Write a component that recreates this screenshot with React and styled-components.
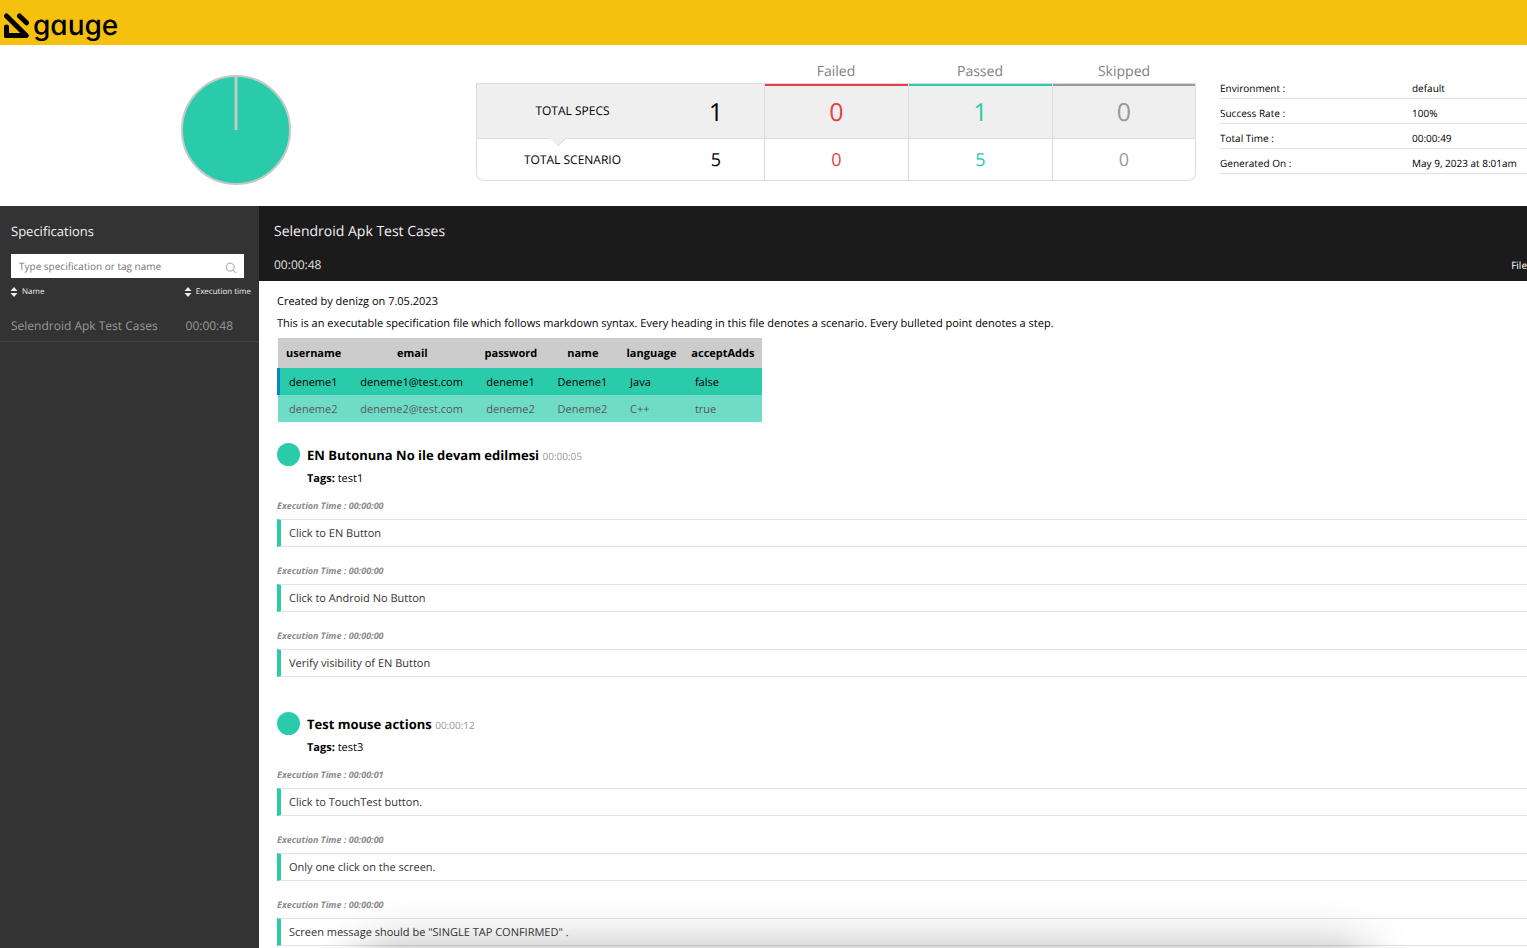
import React from "react";
import styled, { createGlobalStyle } from "styled-components";

const green = "#29cbab";
const red = "#e73e48";
const grey = "#999999";

const GlobalStyle = createGlobalStyle`
  *, *::before, *::after { box-sizing: border-box; }
  html, body { margin: 0; }
  body {
    background: #fff;
    color: #000;
    font: 400 11px/22px "Open Sans", "Noto Sans", sans-serif;
    text-rendering: geometricPrecision;
  }
  input, button { text-rendering: inherit; }
  h1, h2, h3, p, ul, dl, dd { margin: 0; padding: 0; }
  ul { list-style: none; }
`;

const Page = styled.div`
  min-height: 100vh;
  display: flex;
  flex-direction: column;
  overflow-x: hidden;
`;

const TopBar = styled.header`
  height: 45px;
  padding: 6px 3px 0;
  background: #f5c10e;
`;

const Brand = styled.a`
  display: inline-flex;
  gap: 3px;
  color: #000;
  text-decoration: none;
  font: 500 28px/38px Inter, sans-serif;
  font-feature-settings: "cv11";
  svg { margin-top: 7px; }
`;

const Summary = styled.section`
  display: flex;
  height: 161px;
  padding-top: 16px;
`;

const ChartArea = styled.div`
  flex: 1;
  padding: 13px 4px 0 0;
  text-align: center;
`;

const Totals = styled.table`
  width: 720px;
  height: 120px;
  table-layout: fixed;
  border-collapse: separate;
  border-spacing: 0;
  text-align: center;
  thead th {
    height: 22px;
    padding: 0;
    color: #808080;
    font: 400 14px/20px "Open Sans", sans-serif;
  }
`;

const Cell = styled.td`
  padding: ${(p) => (p.$big ? 2 : 0)}px 0 0;
  border: 0 solid #dcdcdc;
  border-left-width: 1px;
  border-bottom-width: 1px;
  background: ${(p) => (p.$big ? "#efefef" : "#fff")};
  height: ${(p) => (p.$big ? 56 : 42)}px;
  color: ${(p) => p.$color || "#000"};
  font-size: ${(p) => (p.$big ? 25 : 18)}px;
  border-top-width: ${(p) => (p.$big ? 1 : 0)}px;
  box-shadow: ${(p) => (p.$big && p.$color ? `inset 0 2px ${p.$color}` : "none")};
  &:last-child { border-right-width: 1px; }
  tr:last-child > &:last-child { border-bottom-right-radius: 8px; }
`;

const LabelCell = styled.th`
  position: relative;
  padding: 0;
  border: solid #dcdcdc;
  border-width: ${(p) => (p.$big ? "1px 0 1px 1px" : "0 0 1px 1px")};
  border-bottom-left-radius: ${(p) => (p.$big ? 0 : 8)}px;
  background: ${(p) => (p.$big ? "#efefef" : "#fff")};
  font-weight: 400;
  font-size: 12px;
`;

const PlainCell = styled(Cell)`
  border-left-width: 0;
`;

const Notch = styled.span`
  position: absolute;
  left: 75px;
  bottom: -6px;
  width: 12px;
  height: 12px;
  background: #efefef;
  border: solid #dcdcdc;
  border-width: 0 1px 0 0;
  transform: rotate(45deg);
  z-index: 1;
`;

const RunInfo = styled.dl`
  width: 307px;
  margin-left: 24px;
  padding-top: 13px;
  font-size: 10px;
  line-height: 14px;
`;

const InfoRow = styled.div`
  display: grid;
  grid-template-columns: 192px 1fr;
  height: 25px;
  padding-top: 7px;
  border-bottom: 1px solid #e2e2e2;
`;

const Body = styled.div`
  flex: 1;
  display: flex;
`;

const Sidebar = styled.aside`
  width: 259px;
  flex: none;
  background: #333;
  color: #eee;
`;

const SidebarTitle = styled.h2`
  padding: 14px 11px 0;
  font-weight: 400;
  font-size: 13px;
  color: #f0f0f0;
`;

const SearchBox = styled.label`
  display: flex;
  align-items: center;
  height: 24px;
  margin: 12px 15px 0 11px;
  padding: 0 7px 0 8px;
  background: #fff;
  input {
    flex: 1;
    min-width: 0;
    padding: 0;
    border: 0;
    outline: 0;
    background: transparent;
    font: 400 10px/16px "Open Sans", sans-serif;
    color: #333;
  }
  input::placeholder { color: #757575; opacity: 1; }
  svg { margin-top: 3px; }
`;

const SortBar = styled.div`
  display: flex;
  justify-content: space-between;
  padding: 6px 8px 0 10px;
`;

const SortButton = styled.button`
  display: inline-flex;
  align-items: center;
  gap: 4px;
  padding: 0;
  border: 0;
  background: none;
  color: #eee;
  font: 400 8px/16px "Open Sans", sans-serif;
`;

const SpecLink = styled.a`
  display: flex;
  justify-content: space-between;
  height: 31px;
  margin-top: 11px;
  padding: 5px 26px 0 11px;
  border-bottom: 1px solid #404040;
  color: #999;
  font-size: 12px;
  line-height: 20px;
  text-decoration: none;
`;

const Content = styled.main`
  flex: 1;
  min-width: 0;
`;

const SpecHeader = styled.header`
  height: 75px;
  padding: 15px 0 0 15px;
  background: #1b1b1b;
  color: #e0e0e0;
  h1 { font-weight: 400; font-size: 14px; line-height: 22px; color: #f0f0f0; }
`;

const SpecMeta = styled.div`
  display: flex;
  justify-content: space-between;
  margin-top: 12px;
  line-height: 20px;
  time { font-size: 12px; }
  span { font-size: 10px; color: #fff; }
`;

const Spec = styled.div`
  padding: 10px 0 3px 18px;
`;

const DataTable = styled.table`
  width: 484px;
  margin: 3px 0 0 1px;
  border-collapse: collapse;
  th { height: 30px; padding: 2px 7px 0; background: #ccc; font-weight: 700; }
`;

const DataRow = styled.tr`
  background: ${green};
  opacity: ${(p) => (p.$active ? 1 : 0.67)};
  td { height: 27px; padding: 2px 11px 0; line-height: 16px; }
  td:first-child {
    box-shadow: ${(p) => (p.$active ? "-1px 0 #0b84c6, inset 2px 0 #0b84c6" : "none")};
  }
`;

const Scenario = styled.section`
  margin-top: ${(p) => (p.$first ? 21 : 35)}px;
`;

const ScenarioHead = styled.div`
  display: grid;
  grid-template-columns: 22px 1fr;
  column-gap: 8px;
  height: 55px;
`;

const StatusDot = styled.span`
  width: 23px;
  height: 23px;
  border-radius: 50%;
  background: ${green};
`;

const ScenarioTitle = styled.h3`
  font-size: 13px;
  line-height: 24px;
  time { font-size: 10px; font-weight: 400; color: ${grey}; }
`;

const ExecTime = styled.p`
  color: #8c8c8c;
  font: italic 700 9px/16px "Open Sans", sans-serif;
`;

const Step = styled.div`
  height: 28px;
  margin: 5px 0 16px;
  padding-left: 8px;
  border: solid #e2e2e2;
  border-width: 1px 0;
  border-left: 4px solid ${green};
  color: #333;
  line-height: 27px;
`;

const DockShadow = styled.div`
  position: fixed;
  top: 100%;
  left: 360px;
  right: 160px;
  height: 80px;
  border-radius: 16px;
  box-shadow: 0 0 48px rgba(0, 0, 0, 0.3);
  pointer-events: none;
`;

const GaugeMark = () => (
  <svg width="27" height="26" viewBox="0 0 27 26" fill="none" stroke="#000" strokeWidth="5" strokeLinecap="round" strokeLinejoin="round" aria-hidden="true">
    <path d="M3.500 3 23.200 22.500H3.500V14.500" />
    <path d="M3.500 14V22.500H20" />
    <path d="M16.500 3 23.500 9.800" />
  </svg>
);

const SortIcon = () => (
  <svg width="8" height="12" viewBox="0 0 8 12" fill="currentColor" aria-hidden="true">
    <path d="M4 1 7.500 5H.5zM4 11 .5 7h7z" />
  </svg>
);

const SearchIcon = () => (
  <svg width="12" height="12" viewBox="0 0 12 12" fill="none" stroke="#bbb" strokeWidth="1.200" aria-hidden="true">
    <circle cx="5.200" cy="5.200" r="4" />
    <path d="m8.200 8.200 3 3" />
  </svg>
);

const info = [
  ["Environment :", "default"],
  ["Success Rate :", "100%"],
  ["Total Time :", "00:00:49"],
  ["Generated On :", "May 9, 2023 at 8:01am"],
];

const columns = ["username", "email", "password", "name", "language", "acceptAdds"];
const rows = [
  ["deneme1", "deneme1@test.com", "deneme1", "Deneme1", "Java", "false"],
  ["deneme2", "deneme2@test.com", "deneme2", "Deneme2", "C++", "true"],
];

const scenarios = [
  {
    title: "EN Butonuna No ile devam edilmesi",
    time: "00:00:05",
    tag: "test1",
    steps: [
      ["00:00:00", "Click to EN Button"],
      ["00:00:00", "Click to Android No Button"],
      ["00:00:00", "Verify visibility of EN Button"],
    ],
  },
  {
    title: "Test mouse actions",
    time: "00:00:12",
    tag: "test3",
    steps: [
      ["00:00:01", "Click to TouchTest button."],
      ["00:00:00", "Only one click on the screen."],
      ["00:00:00", 'Screen message should be "SINGLE TAP CONFIRMED" .'],
    ],
  },
];

const TotalsRow = ({ label, total, counts, big }) => (
  <tr>
    <LabelCell scope="row" $big={big}>
      {label}
      {big && <Notch />}
    </LabelCell>
    <PlainCell $big={big}>{total}</PlainCell>
    <Cell $big={big} $color={red}>{counts[0]}</Cell>
    <Cell $big={big} $color={green}>{counts[1]}</Cell>
    <Cell $big={big} $color={grey}>{counts[2]}</Cell>
  </tr>
);

export default function App() {
  return (
    <Page>
      <GlobalStyle />
      <TopBar>
        <Brand href="#">
          <GaugeMark />
          gauge
        </Brand>
      </TopBar>
      <Summary>
        <ChartArea>
          <svg width="112" height="112" viewBox="0 0 112 112" role="img" aria-label="All passed">
            <circle cx="56" cy="56" r="54" fill={green} stroke="#c4c9c8" strokeWidth="2" />
            <path d="M56 56V2" stroke="#c4c9c8" strokeWidth="3" />
          </svg>
        </ChartArea>
        <Totals>
          <colgroup>
            <col width="192" />
            <col width="96" />
            <col />
            <col />
            <col />
          </colgroup>
          <thead>
            <tr>
              <th colSpan={2} />
              <th scope="col">Failed</th>
              <th scope="col">Passed</th>
              <th scope="col">Skipped</th>
            </tr>
          </thead>
          <tbody>
            <TotalsRow big label="TOTAL SPECS" total={1} counts={[0, 1, 0]} />
            <TotalsRow label="TOTAL SCENARIO" total={5} counts={[0, 5, 0]} />
          </tbody>
        </Totals>
        <RunInfo>
          {info.map(([k, v]) => (
            <InfoRow key={k}>
              <dt>{k}</dt>
              <dd>{v}</dd>
            </InfoRow>
          ))}
        </RunInfo>
      </Summary>
      <Body>
        <Sidebar>
          <SidebarTitle>Specifications</SidebarTitle>
          <SearchBox>
            <input type="text" placeholder="Type specification or tag name" aria-label="Search specifications" />
            <SearchIcon />
          </SearchBox>
          <SortBar>
            <SortButton><SortIcon />Name</SortButton>
            <SortButton><SortIcon />Execution time</SortButton>
          </SortBar>
          <SpecLink href="#">
            <span>Selendroid Apk Test Cases</span>
            <time>00:00:48</time>
          </SpecLink>
        </Sidebar>
        <Content>
          <SpecHeader>
            <h1>Selendroid Apk Test Cases</h1>
            <SpecMeta>
              <time>00:00:48</time>
              <span>File</span>
            </SpecMeta>
          </SpecHeader>
          <Spec>
            <p>Created by denizg on 7.05.2023</p>
            <p>
              This is an executable specification file which follows markdown syntax. Every heading in this file
              denotes a scenario. Every bulleted point denotes a step.
            </p>
            <DataTable>
              <thead>
                <tr>{columns.map((c) => <th key={c} scope="col">{c}</th>)}</tr>
              </thead>
              <tbody>
                {rows.map((r, i) => (
                  <DataRow key={r[0]} $active={i === 0}>
                    {r.map((v, j) => <td key={j}>{v}</td>)}
                  </DataRow>
                ))}
              </tbody>
            </DataTable>
            {scenarios.map((s, i) => (
              <Scenario key={s.title} $first={i === 0}>
                <ScenarioHead>
                  <StatusDot />
                  <div>
                    <ScenarioTitle>{s.title} <time>{s.time}</time></ScenarioTitle>
                    <p><b>Tags:</b> {s.tag}</p>
                  </div>
                </ScenarioHead>
                {s.steps.map(([t, text], j) => (
                  <div key={j}>
                    <ExecTime>Execution Time : {t}</ExecTime>
                    <Step>{text}</Step>
                  </div>
                ))}
              </Scenario>
            ))}
          </Spec>
        </Content>
      </Body>
      <DockShadow />
    </Page>
  );
}
